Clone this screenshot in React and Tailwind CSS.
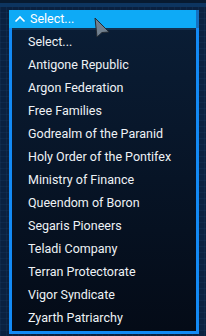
import React from "react";

const options = [
  "Select...",
  "Antigone Republic",
  "Argon Federation",
  "Free Families",
  "Godrealm of the Paranid",
  "Holy Order of the Pontifex",
  "Ministry of Finance",
  "Queendom of Boron",
  "Segaris Pioneers",
  "Teladi Company",
  "Terran Protectorate",
  "Vigor Syndicate",
  "Zyarth Patriarchy",
];

const App = () => {
  return (
    <div
      className="relative w-[206px] h-[336px] overflow-hidden bg-[#0a2140] bg-[linear-gradient(rgba(80,140,200,0.07)_1px,transparent_1px),linear-gradient(90deg,rgba(80,140,200,0.07)_1px,transparent_1px)] bg-[size:6px_6px]"
      style={{ fontFamily: "Roboto, 'Liberation Sans', sans-serif" }}
    >
      {/* top frame band */}
      <div className="h-[3px] bg-[#071a30]"></div>
      <div className="h-[4px] bg-[#0d3560]"></div>

      <div className="mx-[9px] mt-[3px] w-[190px]">
        {/* Header */}
        <div className="flex items-center h-[18px] bg-[#0eaaf6] border-r-[3px] border-[#1570c0] text-white">
          <svg width="12" height="8" viewBox="0 0 12 8" className="ml-[5px] mr-[4px]">
            <path d="M1.5 6.5 L6 2 L10.5 6.5" fill="none" stroke="white" strokeWidth="1.6" />
          </svg>
          <span className="text-[12.5px] leading-none">Select...</span>
        </div>

        {/* List */}
        <div className="border-[3px] border-t-0 border-[#138af5] bg-[linear-gradient(180deg,#0a1d35,#040b17)]">
          <div className="h-[2px] bg-[#13304f]"></div>
          <ul className="flex flex-col pt-[1px] pb-[1px]">
            {options.map((o) => (
              <li
                key={o}
                className="h-[23px] flex items-center pl-[16px] text-[12.5px] text-[#eef2f6] whitespace-nowrap"
              >
                {o}
              </li>
            ))}
          </ul>
        </div>
      </div>

      {/* mouse cursor */}
      <svg
        className="absolute left-[94px] top-[17px]"
        width="16"
        height="22"
        viewBox="0 0 16 22"
      >
        <path d="M1 1 L15 15 L8 15.5 L3 20 Z" fill="#71808f" stroke="#232a33" strokeWidth="1" strokeLinejoin="round" />
      </svg>
    </div>
  );
};

export default App;
